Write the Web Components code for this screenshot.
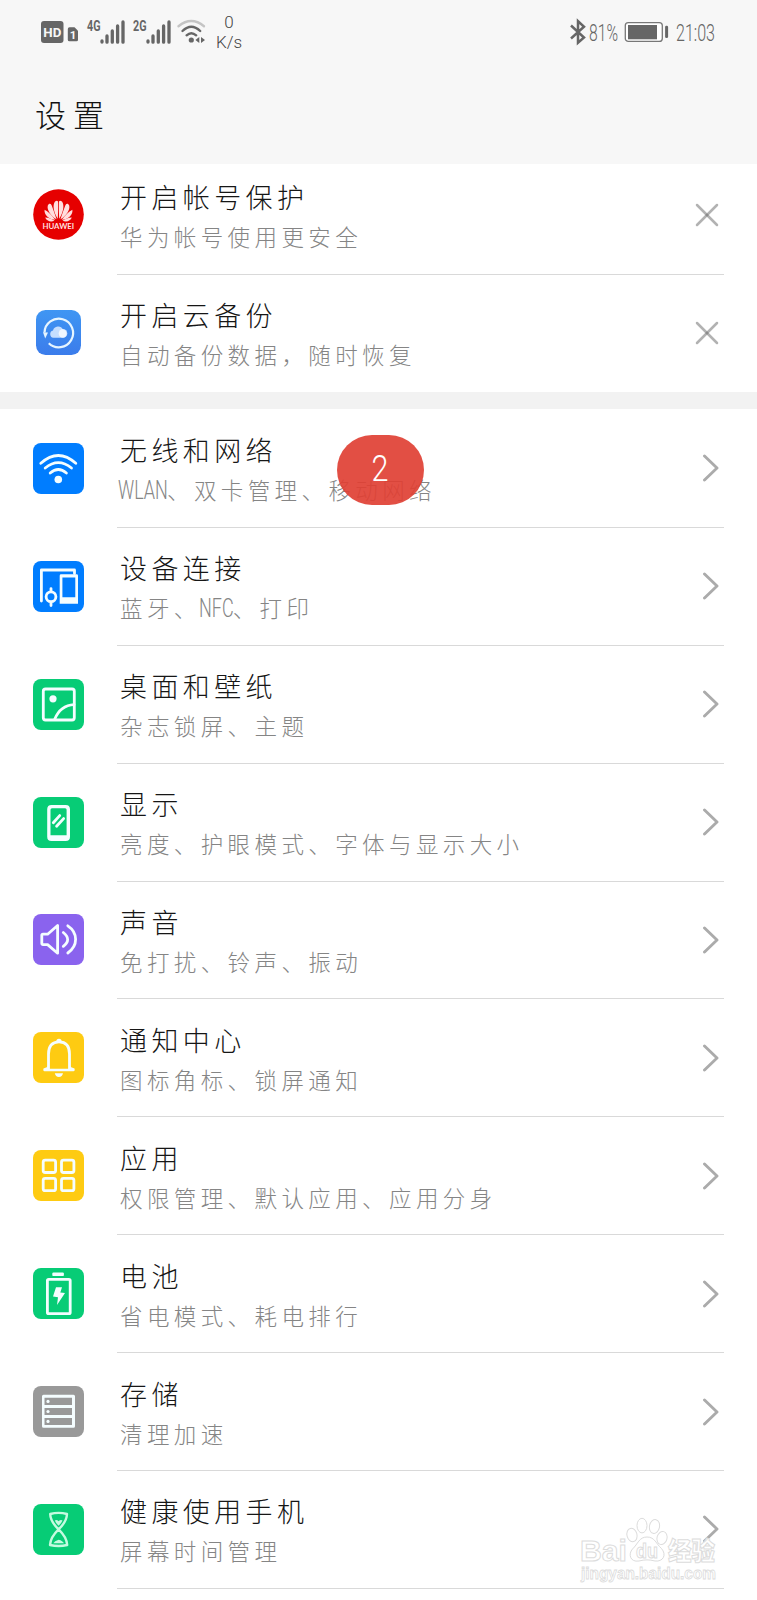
<!DOCTYPE html>
<html lang="zh-CN">
<head>
<meta charset="utf-8">
<title>设置</title>
<style>
  html, body { margin: 0; padding: 0; }
  body {
    width: 757px;
    height: 1600px;
    overflow: hidden;
    background: #fff;
    font-family: "Noto Sans CJK SC", sans-serif;
  }
</style>
</head>
<body>
<settings-page></settings-page>

<script>
/** Icon markup, every tile is drawn on a 51x51 grid. */
const ICONS = {
  huawei: `
    <circle cx="25.5" cy="25.5" r="25.3" fill="#e60000"/>
    <g fill="#ffdede">
      <path d="M24.8 29.8C20.5 23 19.4 16 22 12.4C24.5 11 25.1 12 25.1 14C25.2 20 25 26 24.8 29.8Z"/>
      <path d="M23.5 30.2C17.8 27 13.6 20.5 14.8 16.4C15.7 14.4 17.4 14 18.5 15.9C20 20 22.2 25.6 23.5 30.2Z"/>
      <path d="M22.3 30.8C16.5 30.7 10.8 26 11.6 20.7C14.5 22 19.6 27 22.3 30.8Z"/>
      <path d="M21.4 31.8C17.7 33.5 13.4 32 12.2 28.6C15.6 28.6 19 30.2 21.4 31.8Z"/>
      <path d="M26.2 29.8C30.5 23 31.6 16 29 12.4C26.5 11 25.9 12 25.9 14C25.8 20 26 26 26.2 29.8Z"/>
      <path d="M27.5 30.2C33.2 27 37.4 20.5 36.2 16.4C35.3 14.4 33.6 14 32.5 15.9C31 20 28.8 25.6 27.5 30.2Z"/>
      <path d="M28.7 30.8C34.5 30.7 40.2 26 39.4 20.7C36.5 22 31.4 27 28.7 30.8Z"/>
      <path d="M29.6 31.8C33.3 33.5 37.6 32 38.8 28.6C35.4 28.6 32 30.2 29.6 31.8Z"/>
    </g>
    <text x="9.4" y="40" font-family="Lato, sans-serif" font-weight="700" font-size="6.8"
      textLength="31.8" lengthAdjust="spacingAndGlyphs" fill="#ffdede">HUAWEI</text>`,
  cloud: `
    <defs>
      <linearGradient id="sky" x2="0" y2="1"><stop stop-color="#3f96f3"/><stop offset="1" stop-color="#3b7ceb"/></linearGradient>
    </defs>
    <rect x="3" y="3" width="45" height="45" rx="9.5" fill="url(#sky)"/>
    <path d="M11.5 25.5A14.3 14.3 0 1 1 15.8 36.2" fill="none" stroke="#e6f5ff" stroke-width="2.2"/>
    <path d="M10 25.2L15 25.4L12.2 31.4Z" fill="#e6f5ff"/>
    <path d="M20.3 30.8a3.8 3.8 0 0 1-.3-7.4a5.4 5.4 0 0 1 10-1a4.3 4.3 0 0 1 .2 8.4Z" fill="#c4deff"/>
    <circle cx="30" cy="26.4" r="4.3" fill="#fff" opacity=".75"/>`,
  wifi: `
    <g class="line">
      <path d="M7.8 20.3Q25.3 4.6 42.8 20.3M12.2 25Q25.3 14.2 38.5 25M17.2 30Q25.3 23 33.4 30"/>
    </g>
    <circle class="fill" cx="25.3" cy="36.5" r="3.8"/>`,
  devices: `
    <path class="line" d="M8.4 40V9H41.5V12.6"/>
    <path class="fill" fill-rule="evenodd" d="M28 13.3H43.6Q45 13.3 45 14.7V42.7H26.7V14.7Q26.7 13.3 28 13.3ZM29.4 16.4V36.3H42.3V16.4Z"/>
    <circle class="line" cx="18" cy="35.8" r="4.9"/>
    <path class="line" d="M18 27.6V30M18 42V44.6"/>`,
  picture: `
    <rect class="line" x="10.3" y="10" width="31" height="31" rx="2.2"/>
    <circle class="fill" cx="20" cy="19.8" r="3.6"/>
    <path class="line" d="M21.8 40Q27.5 26.3 41 25.6"/>`,
  display: `
    <path class="fill" fill-rule="evenodd" d="M18.5 8H32.7Q37 8 37 12.3V39.7Q37 44 32.7 44H18.5Q14.2 44 14.2 39.7V12.3Q14.2 8 18.5 8ZM19 11.3Q17.5 11.3 17.5 12.8V38.3H33.6V12.8Q33.6 11.3 32.1 11.3Z"/>
    <path class="line" d="M20.3 25.8L26.7 18.6M23.6 29.2L30.6 21.6"/>`,
  sound: `
    <path class="line" d="M8.8 21.3Q8.8 20.2 10 20.2H14.6L24.6 11.5V39.2L14.6 30.6H10Q8.8 30.6 8.8 29.5Z"/>
    <path class="line" d="M30.3 18.5Q39 25.4 30.3 32.3M34.8 11.8Q42.6 17 42.6 25.3T34.8 39"/>`,
  bell: `
    <path class="line" d="M15.5 37.5V22Q15.5 9.8 26 9.8T36.5 22V37.5"/>
    <path class="fill" d="M23.3 10Q23.3 6.7 26 6.7T28.7 10Z"/>
    <path class="fill" d="M15.5 33.5Q14.5 35.5 10.5 36.6Q9.8 39.2 11.5 39.2H40.5Q42.2 39.2 41.5 36.6Q37.5 35.5 36.5 33.5V36.7H15.5Z"/>
    <path class="fill" d="M21.8 41.2H30Q29.3 44.9 25.9 44.9T21.8 41.2Z"/>`,
  apps: `
    <g class="line">
      <rect x="10.2" y="10.1" width="12.4" height="12.4" rx="2"/>
      <rect x="28.5" y="10.1" width="12.4" height="12.4" rx="2"/>
      <rect x="10.2" y="28.3" width="12.4" height="12.4" rx="2"/>
      <rect x="28.5" y="28.3" width="12.4" height="12.4" rx="2"/>
    </g>`,
  battery: `
    <rect class="fill" x="19.3" y="4.6" width="11.6" height="3.5" rx="1.2"/>
    <rect class="line" x="14.4" y="11.3" width="22.8" height="34.4" rx="1.3"/>
    <path class="fill" d="M23 19.3H29L27.3 24.5L32 25L24 37L25 29.2L20 28.6Z"/>`,
  storage: `
    <path class="fill" fill-rule="evenodd" d="M10.5 8.8H40.5Q42 8.8 42 10.3V40.2Q42 41.8 40.5 41.8H10.5Q9 41.8 9 40.2V10.3Q9 8.8 10.5 8.8ZM11.5 11.8V19H39V11.8ZM11.5 22V29H39V22ZM11.5 32V39H39V32Z"/>
    <circle class="fill" cx="15" cy="15.4" r="1.6"/>
    <circle class="fill" cx="15" cy="25.5" r="1.6"/>
    <circle class="fill" cx="15" cy="35.4" r="1.6"/>`,
  hourglass: `
    <path class="line" style="stroke-width:2.4;stroke:#c5fae0" d="M17.2 10Q25.6 7.8 34 10Q33.8 17.5 25.6 25.4Q33.6 33 34.2 41Q25.6 43 17 41Q17.6 33 25.6 25.4Q17.4 17.5 17.2 10Z"/>
    <path fill="#c5fae0" d="M21.8 16.5Q23.7 15.2 25.6 17.3Q27.6 15.2 29.5 16.5Q28.5 19.2 25.6 21.7Q22.7 19.2 21.8 16.5ZM20.3 39.3Q21.5 36.7 25.6 35.7Q29.8 36.7 31 39.3Z"/>`,
};

const ROWS = [
  { icon: 'wifi', color: '#007dff', title: '无线和网络', sub: 'WLAN、双卡管理、移动网络' },
  { icon: 'devices', color: '#007dff', title: '设备连接', sub: '蓝牙、NFC、打印' },
  { icon: 'picture', color: '#07cc76', title: '桌面和壁纸', sub: '杂志锁屏、主题' },
  { icon: 'display', color: '#07cc76', title: '显示', sub: '亮度、护眼模式、字体与显示大小' },
  { icon: 'sound', color: '#8a63ee', title: '声音', sub: '免打扰、铃声、振动' },
  { icon: 'bell', color: '#fecb12', title: '通知中心', sub: '图标角标、锁屏通知' },
  { icon: 'apps', color: '#fecb12', title: '应用', sub: '权限管理、默认应用、应用分身' },
  { icon: 'battery', color: '#07cc76', title: '电池', sub: '省电模式、耗电排行' },
  { icon: 'storage', color: '#999', title: '存储', sub: '清理加速' },
  { icon: 'hourglass', color: '#07cc76', title: '健康使用手机', sub: '屏幕时间管理' },
];

/** Base element: renders the result of template() into an open shadow root. */
class BaseElement extends HTMLElement {
  connectedCallback() {
    if (this.shadowRoot) return;
    this.attachShadow({ mode: 'open' }).innerHTML = this.template();
  }
}

class SettingIcon extends BaseElement {
  template() {
    return `
      <style>
        :host { display: block; width: 51px; height: 51px; border-radius: 8px; background: var(--tile, none); }
        svg { display: block; }
        .line { fill: none; stroke: #f4fdff; stroke-width: 2.8; stroke-linecap: round; stroke-linejoin: round; }
        .fill { fill: #f4fdff; }
      </style>
      <svg width="51" height="51" viewBox="0 0 51 51">${ICONS[this.getAttribute('name')]}</svg>`;
  }
}
customElements.define('setting-icon', SettingIcon);

class SettingRow extends BaseElement {
  template() {
    const action = this.hasAttribute('closable')
      ? '<svg class="close" width="24" height="24" viewBox="0 0 24 24"><path d="M2 2L22 22"/><path d="M22 2L2 22"/></svg>'
      : '<svg class="next" width="18" height="28" viewBox="0 0 18 28"><path d="M3.5 2L16 14L3.5 26"/></svg>';
    return `
      <style>
        :host { display: flex; height: 117.9px; padding-left: 33px; box-sizing: border-box; align-items: center; }
        ::slotted(setting-icon) { margin-bottom: 1.2px; }
        .body {
          flex: 1; height: 100%; box-sizing: border-box; margin: 0 33px 0 33px; padding: 0 5px 0 3px;
          display: flex; align-items: center; justify-content: space-between;
          border-bottom: 1px solid var(--divider, #d9d9d9);
        }
        .text { display: flex; flex-direction: column; white-space: nowrap; padding-top: 4px; }
        .title { height: 40px; line-height: 40px; font-size: 27px; letter-spacing: 4.4px; font-weight: 300; color: #161616; }
        .sub { height: 40px; line-height: 39px; font-size: 22.5px; letter-spacing: 4.4px; font-weight: 300; color: #858585; }
        svg path { fill: none; stroke: #ababab; stroke-linecap: round; stroke-linejoin: round; }
        .next path { stroke-width: 2.9; }
        .close path { stroke: #666; stroke-opacity: .5; stroke-width: 2.5; }
      </style>
      <slot name="icon"></slot>
      <div class="body">
        <div class="text">
          <div class="title"><slot name="title"></slot></div>
          <div class="sub"><slot name="sub"></slot></div>
        </div>
        ${action}
      </div>`;
  }
}
customElements.define('setting-row', SettingRow);

/** Narrow latin word set between the Chinese characters. */
class LatinWord extends BaseElement {
  template() {
    return `
      <style>
        :host { display: inline-block; width: var(--w); height: 39px; vertical-align: top; margin-left: -2px; }
        span {
          display: inline-block; transform: scaleX(.72); transform-origin: 0 50%;
          font: 300 25px/39px Roboto, sans-serif; letter-spacing: 0; color: #858585;
        }
      </style>
      <span><slot></slot></span>`;
  }
}
customElements.define('latin-word', LatinWord);

class StatusBar extends BaseElement {
  signal(label) {
    return `
      <svg width="38" height="26" viewBox="0 0 38 26">
        <text x="0" y="12" font-size="14" textLength="13.5" lengthAdjust="spacingAndGlyphs">${label}</text>
        <path class="bars" d="M15 22V23M20 17V23.2M25.3 12V23.2M30.6 7V23.2M36 3V23.2"/>
      </svg>`;
  }

  template() {
    return `
      <style>
        :host { display: flex; justify-content: space-between; height: 64px; padding: 0 41px; box-sizing: border-box; color: #666; }
        .group { display: flex; align-items: center; height: 64px; }
        svg { display: block; overflow: visible; }
        svg text { font-family: "Roboto", sans-serif; font-weight: 700; fill: #666; }
        .bars { fill: none; stroke: #666; stroke-width: 3.3; stroke-linecap: round; }
        .speed { display: flex; flex-direction: column; width: 26px; font: 300 17px/20px Roboto, sans-serif; text-align: center; color: #444; }
        .num text { font-weight: 300; font-size: 24px; }
      </style>
      <div class="group" style="gap: 8px">
        <svg width="38" height="26" viewBox="0 0 38 26">
          <rect x="0" y="2" width="22.5" height="22" rx="3" fill="#666"/>
          <text x="2.3" y="17.8" font-size="13.5" textLength="18" lengthAdjust="spacingAndGlyphs" style="fill:#f7f7f7">HD</text>
          <path d="M28.5 8.3H33.5L37 11.8V20.7Q37 22.3 35.4 22.3H28.4Q26.8 22.3 26.8 20.7V10Q26.8 8.3 28.5 8.3Z" fill="#666"/>
          <text x="28.8" y="20" font-size="11.5" style="fill:#f7f7f7">1</text>
        </svg>
        ${this.signal('4G')}
        ${this.signal('2G')}
        <svg style="margin: 0 0 0 -2px" width="31" height="26" viewBox="0 0 31 26" fill="none" stroke-width="2.4" stroke-linecap="round">
          <path d="M1.5 7.2Q14.3-3 27 7.2" stroke="#c4c4c4"/>
          <path d="M5.5 12Q14.3 3.5 23.2 12M9.6 16.3Q14.3 12 19.2 16.3" stroke="#666"/>
          <circle cx="14.3" cy="21" r="2.6" fill="#666"/>
          <path d="M22.3 18V24L18.4 21ZM24 18V24L28 21Z" fill="#666"/>
        </svg>
        <div class="speed"><span>0</span><span>K/s</span></div>
      </div>
      <div class="group">
        <svg width="17" height="26" viewBox="0 0 17 26"><path d="M2 6.5L15 18.5L9 23.8V2.2L15 7.8L2 19.5" fill="none" stroke="#666" stroke-width="2.5"/></svg>
        <svg class="num" width="32" height="26"><text x="3" y="22" textLength="29" lengthAdjust="spacingAndGlyphs">81%</text></svg>
        <svg style="margin-left: 6px" width="45" height="26" viewBox="0 0 45 26">
          <rect x="1.3" y="3.6" width="37" height="18.8" rx="3" fill="#fff" stroke="#777" stroke-width="1.3"/>
          <rect x="4" y="6" width="29" height="14.3" fill="#666"/>
          <rect x="41.1" y="6.7" width="3" height="12.4" rx="1.3" fill="#666"/>
        </svg>
        <svg class="num" style="margin-left: 7px" width="40" height="26"><text x="0" y="22" textLength="39" lengthAdjust="spacingAndGlyphs">21:03</text></svg>
      </div>`;
  }
}
customElements.define('status-bar', StatusBar);

class CountBubble extends BaseElement {
  template() {
    return `
      <style>
        :host {
          position: absolute; left: 337px; top: 435px; width: 87px; height: 70px; box-sizing: border-box; padding: 0 2px 2px 0;
          display: flex; align-items: center; justify-content: center;
          border-radius: 36px; background: rgba(223, 64, 52, .92);
          font: 300 36px/40px Roboto, sans-serif; color: #fff;
        }
        span { display: block; transform: scaleX(.85); }
      </style>
      <span><slot></slot></span>`;
  }
}
customElements.define('count-bubble', CountBubble);

class PageWatermark extends BaseElement {
  template() {
    return `
      <style>
        :host { position: absolute; left: 577px; top: 1514px; width: 145px; height: 76px; }
        svg { display: block; overflow: visible; }
        text, ellipse, path { fill: rgba(255, 255, 255, .75); stroke: #dcdcdc; stroke-width: 1; }
        .cn { font: 900 25px "Noto Sans CJK SC", sans-serif; }
        .lat { font: 700 30px "Liberation Sans", sans-serif; }
      </style>
      <svg width="145" height="76" viewBox="0 0 145 76">
        <text class="lat" x="3" y="46.5" textLength="47" lengthAdjust="spacingAndGlyphs">Bai</text>
        <ellipse cx="55" cy="21" rx="5" ry="6.8" transform="rotate(-15 55 21)"/>
        <ellipse cx="65" cy="11.6" rx="5" ry="7.3"/>
        <ellipse cx="77.5" cy="12.5" rx="5" ry="7" transform="rotate(12 77.5 12.5)"/>
        <ellipse cx="85" cy="24" rx="5" ry="6.6" transform="rotate(15 85 24)"/>
        <path d="M70 23C78 23 79 30 84.5 34.5C90 41 86 48 78 47C72 45.5 68 45.5 62 47C53 48.5 51 40 55.5 35C61 30 62 23 70 23Z"/>
        <text class="lat" x="59" y="44" style="font-size:21px" textLength="22" lengthAdjust="spacingAndGlyphs">du</text>
        <text class="cn" x="91" y="45.5" textLength="47" lengthAdjust="spacingAndGlyphs">经验</text>
        <text class="lat" x="4" y="65" style="font-size:16px;stroke-width:.8" textLength="135" lengthAdjust="spacingAndGlyphs">jingyan.baidu.com</text>
      </svg>`;
  }
}
customElements.define('page-watermark', PageWatermark);

class SettingsPage extends BaseElement {
  subtitle(text) {
    return text
      .replace('WLAN', '<latin-word style="--w:49px">WLAN</latin-word>')
      .replace('NFC', '<latin-word style="--w:34px">NFC</latin-word>');
  }

  row({ icon, color, title, sub }, attrs = '') {
    return `
      <setting-row ${attrs}>
        <setting-icon slot="icon" name="${icon}" style="--tile:${color}"></setting-icon>
        <span slot="title">${title}</span>
        <span slot="sub">${this.subtitle(sub)}</span>
      </setting-row>`;
  }

  template() {
    return `
      <style>
        :host { display: flex; flex-direction: column; position: relative; width: 757px; height: 1600px; overflow: hidden; }
        header { height: 164px; flex: none; background: #f7f7f7; }
        h1 { margin: 0; padding-left: 35px; height: 100px; line-height: 100px; font-size: 31px; font-weight: 300; letter-spacing: 7px; color: #111; }
        .cards { height: 228.4px; flex: none; display: flex; flex-direction: column; justify-content: flex-end; overflow: hidden; }
        setting-row { flex: none; }
        .last { --divider: transparent; }
        .gap { height: 17px; flex: none; background: #f2f2f2; }
        .list { padding-top: .6px; }
      </style>
      <header>
        <status-bar></status-bar>
        <h1>设置</h1>
      </header>
      <section class="cards">
        ${this.row({ icon: 'huawei', color: 'none', title: '开启帐号保护', sub: '华为帐号使用更安全' }, 'closable')}
        ${this.row({ icon: 'cloud', color: 'none', title: '开启云备份', sub: '自动备份数据，随时恢复' }, 'closable class="last"')}
      </section>
      <div class="gap"></div>
      <section class="list">${ROWS.map((item) => this.row(item)).join('')}</section>
      <count-bubble>2</count-bubble>
      <page-watermark></page-watermark>`;
  }
}
customElements.define('settings-page', SettingsPage);
</script>
</body>
</html>
